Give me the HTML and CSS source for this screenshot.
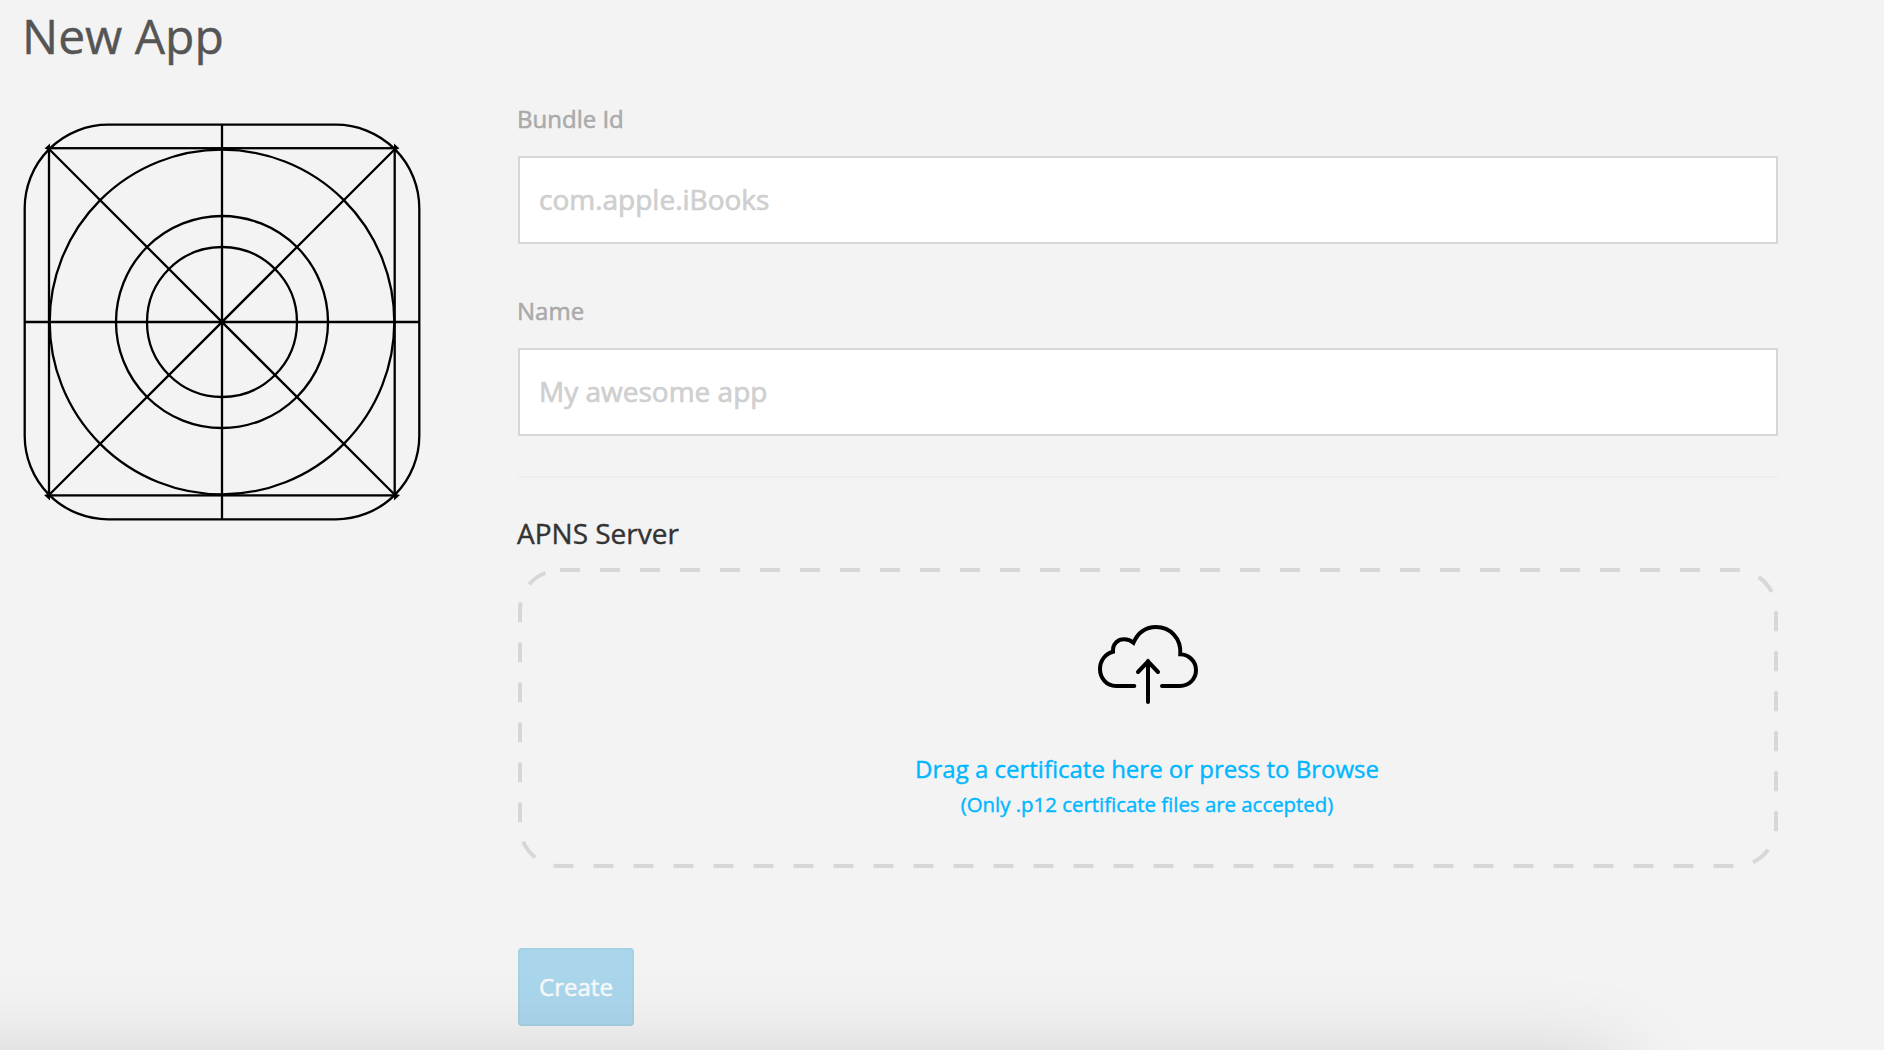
FILE: index.html
```html
<!DOCTYPE html>
<html lang="en">
<head>
<meta charset="utf-8">
<title>New App</title>
<link rel="stylesheet" href="styles.css">
</head>
<body>
<main class="page">
  <h1 class="title"><span>New App</span></h1>
  <div class="layout">
    <svg class="app-icon" viewBox="0 0 400 400" fill="none" stroke="#000" stroke-width="2.3">
      <rect x="2.7" y="2.7" width="394.6" height="394.6" rx="83.5"/>
      <rect x="27" y="26.2" width="345.7" height="347.2"/>
      <circle cx="200" cy="200" r="172.3"/>
      <circle cx="200" cy="200" r="106"/>
      <circle cx="200" cy="200" r="75"/>
      <path d="M200 2v396M3 200h394M25 25l350 350M375 25L25 375"/>
      <path d="M22.500 26.500l5.500-5v7zM377.500 26.500l-5.500-5v7zM22 373l6 5.500v-7zM378 373l-6 5.500v-7z" fill="#000" stroke="none"/>
    </svg>
    <form class="form">
      <label class="label" for="bundle"><span>Bundle Id</span></label>
      <input class="input" id="bundle" type="text" placeholder="com.apple.iBooks">
      <label class="label" for="name"><span>Name</span></label>
      <input class="input" id="name" type="text" placeholder="My awesome app">
      <hr class="divider">
      <h2 class="section"><span>APNS Server</span></h2>
      <div class="dropzone">
        <svg class="outline" viewBox="0 0 1260 300" fill="none"><rect x="2" y="2" width="1256" height="296" rx="40" stroke="#d7d7d7" stroke-width="4" stroke-dasharray="20 20"/></svg>
        <svg class="cloud" viewBox="0 0 104 84" fill="none" stroke="#000" stroke-width="4" stroke-linecap="round">
          <path d="M38.3 59.9H20C10.500 59.900 4 52 4 43C4 34.500 9.500 27.500 17 25.700C16.500 17 22.500 13.300 28 13.300C32 13.300 35 14.500 37.500 16.700C42 6.500 50 1 60 1C74 1 85.500 12 84.300 28.300C93 28.500 100 35.500 100 44C100 53 93 59.900 84 59.900H66M52 76V35M42 46l10-10.500L62 46"/>
        </svg>
        <p class="drop-main"><span>Drag a certificate here or press to Browse</span></p>
        <p class="drop-note"><span>(Only .p12 certificate files are accepted)</span></p>
      </div>
      <button class="create" type="button" disabled><span>Create</span></button>
    </form>
  </div>
  <div class="shade"></div>
</main>
</body>
</html>
```
FILE: styles.css
```css
* { box-sizing: border-box; }
body { margin: 0; background: #f3f3f3; font-family: "Open Sans", sans-serif; }
.page { position: relative; height: 1050px; overflow: hidden; padding: 0 106px 0 22px; -webkit-text-stroke-width: .4px; }
.title { margin: 0; height: 100px; padding-top: 1px; font-size: 48px; line-height: 70px; font-weight: 400; color: #555; }
.layout { display: grid; grid-template-columns: 400px 1260px; column-gap: 96px; }
.app-icon { width: 400px; height: 400px; margin-top: 22px; overflow: visible; }
.form { display: flex; flex-direction: column; align-items: flex-start; }
.label { height: 56px; margin-left: -1px; font-size: 24px; line-height: 37px; color: #aaa; -webkit-text-stroke-width: .55px; }
.input { width: 100%; height: 88px; padding: 0 18px 2px 19px; margin-bottom: 48px; border: 2px solid #d7d7d7; border-radius: 0; background: #fff; font: 400 28px "Open Sans", sans-serif; color: #333; outline: 0; -webkit-text-stroke-width: .7px; }
.input::placeholder { color: #cfcfcf; opacity: 1; }
.divider { width: 100%; height: 2px; margin: -8px 0 0; border: 0; background: #ededed; }
.section { margin: 0 0 0 -1px; height: 90px; padding-top: 35px; font-size: 28px; line-height: 40px; font-weight: 400; color: #333; }
.dropzone { position: relative; width: 100%; height: 300px; display: flex; flex-direction: column; align-items: center; padding-top: 58px; color: #00b7ff; }
.outline { position: absolute; inset: 0; width: 100%; height: 100%; }
.cloud { width: 104px; height: 84px; overflow: visible; }
.drop-main, .drop-note { margin: 0; padding-right: 2px; white-space: nowrap; }
.drop-main { margin-top: 41px; font-size: 24px; line-height: 36px; }
.drop-note { font-size: 20.4px; line-height: 34px; }
.create { width: 116px; height: 78px; margin-top: 80px; padding: 0 0 2px; border: 2px solid #a6d0e4; border-radius: 4px; background: #aad6ec; font: 400 24px "Open Sans", sans-serif; color: #f6f8f9; -webkit-text-stroke-width: .6px; }
.shade { position: absolute; left: -200px; top: 1062px; width: 1822px; height: 200px; box-shadow: 0 0 90px rgba(0, 0, 0, .16); pointer-events: none; }
```
